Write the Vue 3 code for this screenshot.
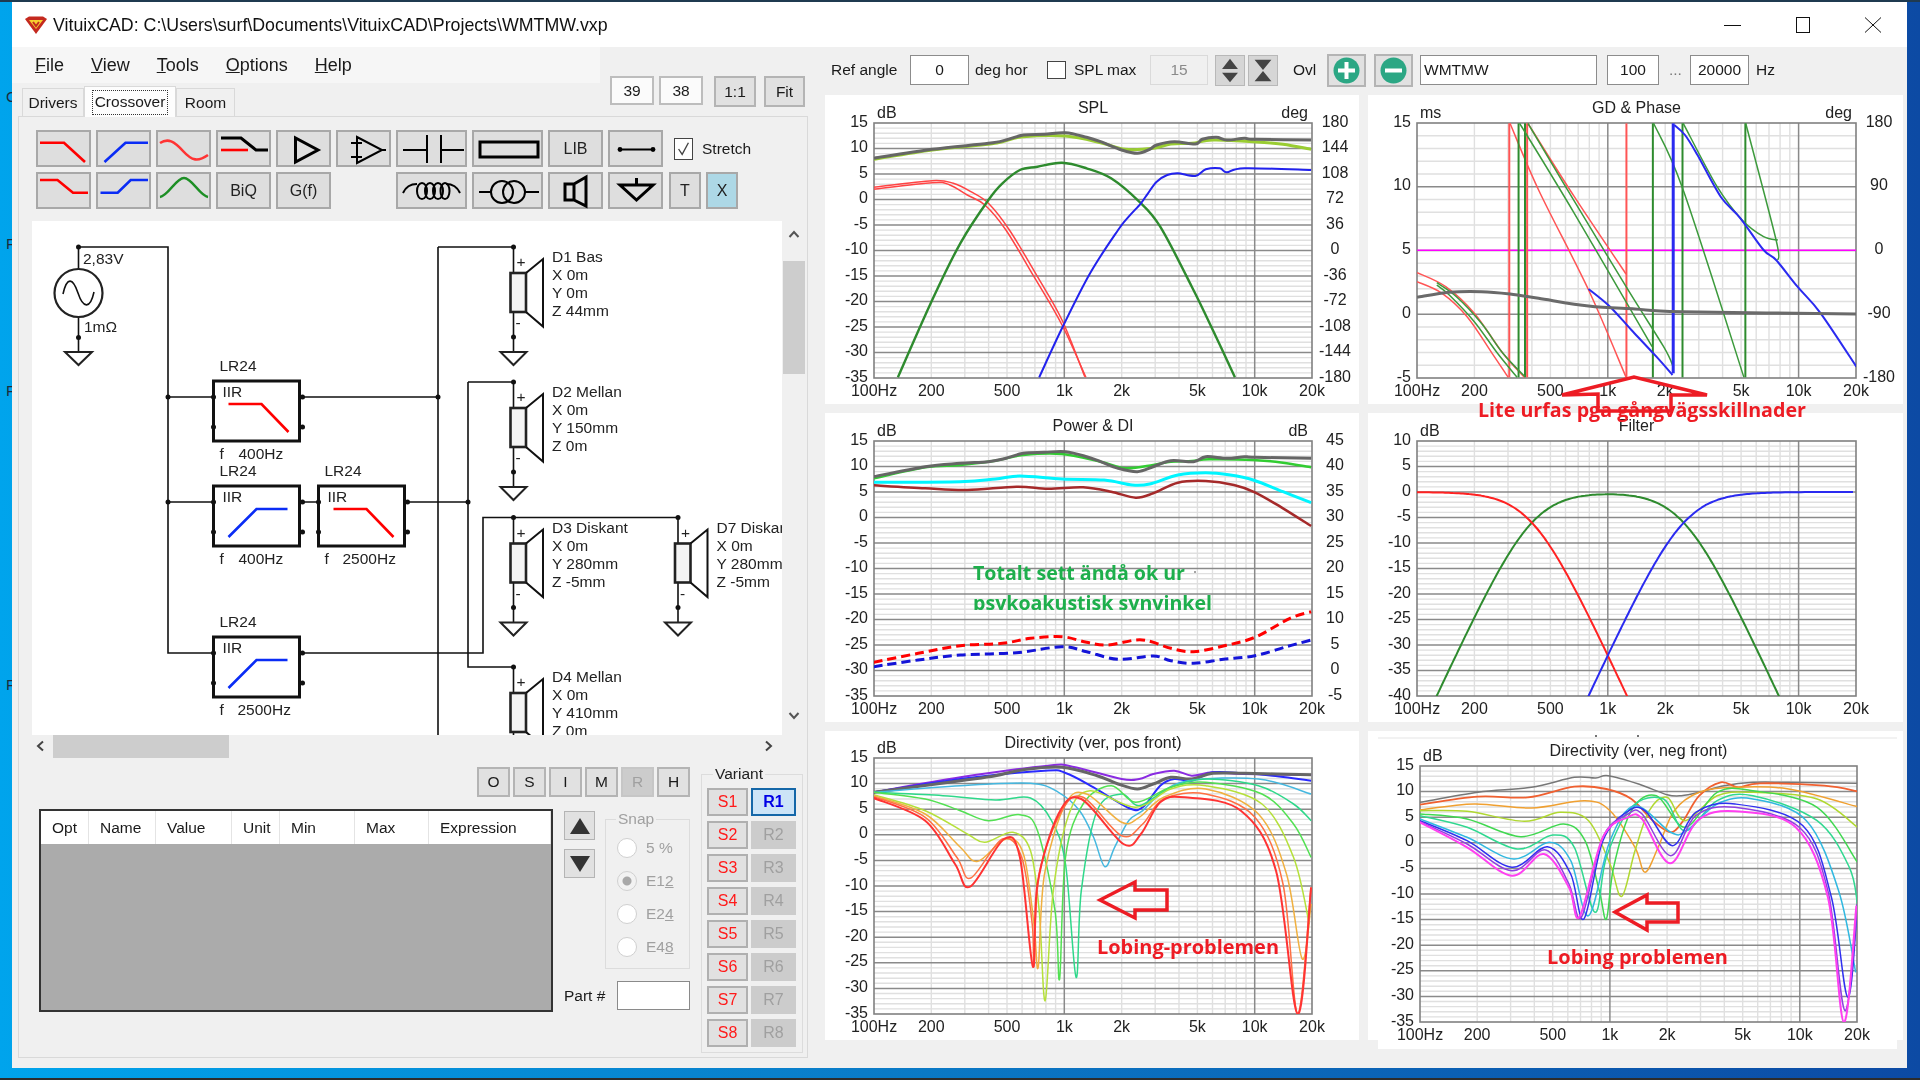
<template>
  <div class="desktop">
    <span class="desk-label desk-c">C</span>
    <span class="desk-label desk-f1">F</span>
    <span class="desk-label desk-f2">F</span>
    <span class="desk-label desk-f3">F</span>
    <div class="edge-top"></div>

    <div class="window">
      <div class="titlebar">
        <svg class="app-icon" viewBox="0 0 24 18">
          <path d="M1 3 L5 0.5 H19 L23 3 L12 18 Z" fill="#c4291f" />
          <path d="M5 4 H19 L12 13 Z" fill="#f6d02f" />
          <path d="M9 6 L12 10 L15 6" fill="none" stroke="#c4291f" stroke-width="2" />
        </svg>
        <span class="title-text">VituixCAD: C:\Users\surf\Documents\VituixCAD\Projects\WMTMW.vxp</span>
        <div class="win-btns">
          <svg class="win-btn" viewBox="0 0 18 16"><path d="M0 8.5 H17" /></svg>
          <svg class="win-btn" viewBox="0 0 18 16"><rect x="2.5" y="0.5" width="13" height="15" /></svg>
          <svg class="win-btn" viewBox="0 0 18 16"><path d="M1 0.5 L17 15.5 M17 0.5 L1 15.5" /></svg>
        </div>
      </div>

      <div class="client">
        <div class="left-pane">
          <div class="head-row">
            <div class="head-left">
              <div class="menu-bar">
                <span v-for="m in menus" :key="m.rest" class="menu-item"><u>{{ m.key }}</u>{{ m.rest }}</span>
              </div>
              <div class="tabs">
                <div class="tab tab-drivers">Drivers</div>
                <div class="tab tab-active"><span class="focus-rect">Crossover</span></div>
                <div class="tab tab-room">Room</div>
              </div>
            </div>
            <div class="view-btns">
              <div class="view-btn light">39</div>
              <div class="view-btn light">38</div>
              <div class="view-btn one">1:1</div>
              <div class="view-btn fit">Fit</div>
            </div>
          </div>

          <div class="tab-panel">
            <div class="tool-row">
              <button class="tool"><svg viewBox="0 0 55 37"><path class="red" d="M4 12.7 H28 L49 32" /></svg></button>
              <button class="tool"><svg viewBox="0 0 55 37"><path class="blue" d="M8.5 32 L29.5 12.7 H52" /></svg></button>
              <button class="tool"><svg viewBox="0 0 55 37"><path class="red soft" d="M4 13 C12 8 18 11 27 21 S42 32 52 25" /></svg></button>
              <button class="tool"><svg viewBox="0 0 55 37"><path class="ink" d="M5 8 H25 L40 20 H52" /><path class="red" d="M5 20 H32" /></svg></button>
              <button class="tool"><svg viewBox="0 0 55 37"><path class="ink" d="M19.5 8 V32 L42 20 Z" /></svg></button>
              <button class="tool">
                <svg viewBox="0 0 55 37">
                  <path class="ink thin" d="M21 7 V33 L46 20 Z" />
                  <path class="ink thin" d="M15 13 H26 M15 27 H26 M46 20 H50 M21 10 V16" />
                </svg>
              </button>
              <button class="tool wide"><svg viewBox="0 0 71 37"><path class="ink thin" d="M7 20 H31 M45 20 H68 M31 5 V33 M45 5 V33" /></svg></button>
              <button class="tool wide"><svg viewBox="0 0 71 37"><rect class="ink" x="8" y="12" width="58" height="15" /></svg></button>
              <button class="tool">LIB</button>
              <button class="tool"><svg viewBox="0 0 55 37"><path class="ink thin" d="M12 19.5 H45" /><circle cx="12" cy="19.5" r="2.4" /><circle cx="45" cy="19.5" r="2.4" /></svg></button>
              <label class="stretch">
                <span class="check-box"><svg viewBox="0 0 19 22"><path d="M4 11 L8 17 L15 4" /></svg></span>
                <span>Stretch</span>
              </label>
            </div>
            <div class="tool-row">
              <button class="tool"><svg viewBox="0 0 55 37"><path class="red" d="M4 8 H21.5 L37 20.7 H52" /></svg></button>
              <button class="tool"><svg viewBox="0 0 55 37"><path class="blue" d="M4.5 20.7 H21.7 L34.7 8 H52" /></svg></button>
              <button class="tool"><svg viewBox="0 0 55 37"><path class="green" d="M4 25 C12 24 20 6 28 6 S44 24 52 25" /></svg></button>
              <button class="tool">BiQ</button>
              <button class="tool">G(f)</button>
              <div class="tool-gap"></div>
              <button class="tool wide">
                <svg viewBox="0 0 71 37">
                  <path class="ink thin" d="M7 21 Q11 12 21 12 M50 12 Q60 12 64 21" />
                  <ellipse class="ink thin" cx="26" cy="19" rx="5" ry="8" />
                  <ellipse class="ink thin" cx="34" cy="19" rx="5" ry="8" />
                  <ellipse class="ink thin" cx="42" cy="19" rx="5" ry="8" />
                  <ellipse class="ink thin" cx="49" cy="19" rx="4.5" ry="8" />
                </svg>
              </button>
              <button class="tool wide">
                <svg viewBox="0 0 71 37">
                  <path class="ink thin" d="M7 20 H19 M53 20 H67" />
                  <circle class="ink thin" cx="30" cy="20" r="11" />
                  <circle class="ink thin" cx="42" cy="20" r="11" />
                </svg>
              </button>
              <button class="tool"><svg viewBox="0 0 55 37"><path class="ink" d="M17 12 H26 V28 H17 Z M26 12 L38 5 V34 L26 28" /></svg></button>
              <button class="tool"><svg viewBox="0 0 55 37"><path class="ink" d="M12 13 H45 L28.5 28 Z M28.5 6 V13" /></svg></button>
              <button class="tool narrow first-narrow">T</button>
              <button class="tool narrow x-on">X</button>
            </div>

            <div class="canvas-row">
              <svg class="schematic" width="750" height="514" viewBox="31 221 750 514">
                <g class="wires">
                  <path d="M77.5 247 H167 V653 H212 M167 397 H212 M167 502 H212" />
                  <path d="M77.5 247 V269 M77.5 317 V352" />
                  <path d="M302 397 H437 M437 247 H512.5 M437 247 V735" />
                  <path d="M302 502 H317.5 M407 502 H467 M467 382 H512.5 M467 382 V667 H512.5" />
                  <path d="M302 653 H482 V517.5 H677" />
                </g>
                <circle class="src" cx="77.5" cy="293" r="24" />
                <path class="wires" d="M62 294 C66 276 72 278 77 293 S89 310 93 292" />
                <path class="gnd" d="M64 352 H91 L77.5 365 Z" />
                <circle class="dot" cx="77.5" cy="247" r="2.5" />
                <circle class="dot" cx="77.5" cy="337.5" r="2.5" />
                <text x="82" y="264">2,83V</text>
                <text x="83" y="332">1mΩ</text>
                <circle v-for="p in junctions" :key="p[0] + '-' + p[1]" class="dot" :cx="p[0]" :cy="p[1]" r="2.5" />

                <g v-for="b in blocks" :key="b.x + '-' + b.y">
                  <rect class="block" :x="b.x" :y="b.y" width="86" height="60" />
                  <text :x="b.x + 6" :y="b.y - 10">LR24</text>
                  <text :x="b.x + 9" :y="b.y + 16">IIR</text>
                  <text :x="b.x + 6" :y="b.y + 78">f</text>
                  <text :x="b.x + b.fx" :y="b.y + 78">{{ b.freq }}</text>
                  <path :class="b.low ? 'red' : 'blue'" :d="b.low
                    ? `M${b.x + 15} ${b.y + 23} H${b.x + 48} L${b.x + 75} ${b.y + 51}`
                    : `M${b.x + 15} ${b.y + 51} L${b.x + 43} ${b.y + 23} H${b.x + 74}`" />
                  <circle class="dot" :cx="b.x" :cy="b.y + 16" r="2.5" />
                  <circle class="dot" :cx="b.x" :cy="b.y + 46" r="2.5" />
                  <circle class="dot" :cx="b.x + 89" :cy="b.y + 16" r="2.5" />
                  <circle class="dot" :cx="b.x + 89" :cy="b.y + 46" r="2.5" />
                </g>

                <g v-for="d in drivers" :key="d.name">
                  <path class="wires" :d="`M${d.x} ${d.y} V${d.y + 26} M${d.x} ${d.y + 65} V${d.y + 105}`" />
                  <circle class="dot" :cx="d.x" :cy="d.y" r="2.5" />
                  <circle class="dot" :cx="d.x" :cy="d.y + 90" r="2.5" />
                  <path class="gnd" :d="`M${d.x - 13} ${d.y + 105} H${d.x + 13} L${d.x} ${d.y + 118} Z`" />
                  <rect class="spk" :x="d.x - 3" :y="d.y + 26" width="15.5" height="39" />
                  <path class="wires thick" :d="`M${d.x + 12.5} ${d.y + 26} L${d.x + 29.5} ${d.y + 12} V${d.y + 79.5} L${d.x + 12.5} ${d.y + 65}`" />
                  <text :x="d.x + 3" :y="d.y + 20">+</text>
                  <text :x="d.x + 2" :y="d.y + 81">-</text>
                  <text :x="d.x + 38.5" :y="d.y + 15">{{ d.name }}</text>
                  <text :x="d.x + 38.5" :y="d.y + 33">X 0m</text>
                  <text :x="d.x + 38.5" :y="d.y + 51">Y {{ d.ypos }}</text>
                  <text :x="d.x + 38.5" :y="d.y + 69">Z {{ d.zpos }}</text>
                </g>
              </svg>
              <div class="vscroll">
                <svg class="chev" viewBox="0 0 12 8"><path d="M1.5 7 L6 2 L10.5 7" /></svg>
                <div class="vthumb"></div>
                <svg class="chev bottom" viewBox="0 0 12 8"><path d="M1.5 1 L6 6 L10.5 1" /></svg>
              </div>
            </div>
            <div class="hscroll">
              <svg class="hchev" viewBox="0 0 8 12"><path d="M7 1.5 L2 6 L7 10.5" /></svg>
              <div class="hthumb"></div>
              <svg class="hchev right" viewBox="0 0 8 12"><path d="M1 1.5 L6 6 L1 10.5" /></svg>
            </div>

            <div class="lower">
              <div class="lower-left">
                <div class="letter-row">
                  <div v-for="l in letters" :key="l" class="letter" :class="{ off: l === 'R' }">{{ l }}</div>
                </div>
                <div class="table-row">
                  <div class="opt-table">
                    <div class="opt-head">
                      <div v-for="h in tableCols" :key="h" class="opt-cell">{{ h }}</div>
                    </div>
                  </div>
                  <div class="side">
                    <div class="side-top">
                      <div class="arrows">
                        <div class="arrow-btn"><svg viewBox="0 0 20 18"><path d="M10 1 L20 17 H0 Z" /></svg></div>
                        <div class="arrow-btn"><svg viewBox="0 0 20 18"><path d="M0 1 H20 L10 17 Z" /></svg></div>
                      </div>
                      <div class="snap">
                        <span class="group-label snap-label">Snap</span>
                        <div v-for="s in snaps" :key="s.key" class="snap-opt">
                          <span class="radio" :class="{ sel: s.sel }"></span>
                          <span>{{ s.text }}<u v-if="s.sel || s.text !== '5 '">{{ s.key }}</u><template v-else>{{ s.key }}</template></span>
                        </div>
                      </div>
                    </div>
                    <div class="part-row">
                      <span class="part-label">Part #</span>
                      <div class="part-input"></div>
                    </div>
                  </div>
                </div>
              </div>
              <div class="variant">
                <span class="group-label variant-label">Variant</span>
                <div v-for="n in 8" :key="n" class="variant-row">
                  <div class="var-s">S{{ n }}</div>
                  <div class="var-r" :class="{ current: n === 1 }">R{{ n }}</div>
                </div>
              </div>
            </div>
          </div>
        </div>

        <div class="right-pane">
          <div class="top-bar">
            <span>Ref angle</span>
            <div class="field w59">0</div>
            <span>deg hor</span>
            <span class="check-box small"></span>
            <span>SPL max</span>
            <div class="field w58 off">15</div>
            <div class="spin">
              <svg viewBox="0 0 29 31"><path d="M14.5 3 L23 14 H6 Z M6 18 H23 L14.5 28 Z" /></svg>
            </div>
            <div class="spin">
              <svg viewBox="0 0 30 31"><path d="M6 4 H24 L15 15 Z M15 16 L24 27 H6 Z" /></svg>
            </div>
            <span>Ovl</span>
            <div class="round-btn">
              <svg viewBox="0 0 39 33"><circle cx="19.5" cy="16.5" r="13" /><path d="M19.5 8 V25 M11 16.5 H28" /></svg>
            </div>
            <div class="round-btn">
              <svg viewBox="0 0 39 33"><circle cx="19.5" cy="16.5" r="13" /><path d="M11 16.5 H28" /></svg>
            </div>
            <div class="field w177">WMTMW</div>
            <div class="field w52">100</div>
            <span class="dots">...</span>
            <div class="field w59">20000</div>
            <span>Hz</span>
          </div>

          <div class="chart-grid">
            <div v-for="c in charts" :key="c.key" class="chart-panel" :class="{ raised: c.raised }">
              <svg class="chart" :width="c.w" :height="c.h" :viewBox="`${c.x} ${c.y} ${c.w} ${c.h}`">
                <defs>
                  <clipPath :id="`plot-${c.key}`">
                    <rect :x="c.px" :y="c.py" :width="c.pw" :height="c.ph" />
                  </clipPath>
                </defs>
                <template v-if="c.paste">
                  <rect :x="c.paste.x" :y="c.paste.y" :width="c.paste.w" :height="c.paste.h" fill="#fff" />
                  <path :d="`M${c.paste.x} ${c.paste.y + 1} h${c.paste.w}`" stroke="#eee" stroke-width="1.5" />
                </template>

                <path class="grid-minor" :d="c.minorPath" />
                <path class="grid-major" :d="c.majorPath" />
                <rect class="plot-frame" :x="c.px" :y="c.py" :width="c.pw" :height="c.ph" />

                <g :clip-path="`url(#plot-${c.key})`">
                  <path
                    v-for="(t, i) in c.traces"
                    :key="i"
                    class="trace"
                    :d="t.d"
                    :stroke="t.color"
                    :stroke-width="t.w"
                    :stroke-dasharray="t.dash"
                  />
                </g>

                <text :x="c.px + c.pw / 2" :y="c.py - 16" class="mid">{{ c.title }}</text>
                <text :x="c.px + 3" :y="c.py - 11">{{ c.leftUnit }}</text>
                <text v-if="c.rightUnit" :x="c.px + c.pw - 4" :y="c.py - 11" class="end">{{ c.rightUnit }}</text>
                <text v-for="t in c.leftTicks" :key="t.v" :x="c.px - 6" :y="t.y" class="end">{{ t.v }}</text>
                <text v-for="t in c.rightTicks" :key="t.v" :x="c.px + c.pw + 23" :y="t.y" class="mid">{{ t.v }}</text>
                <text v-for="t in c.xTicks" :key="t.v" :x="t.x" :y="c.py + c.ph + 12" class="mid">{{ t.v }}</text>

                <path v-if="c.arrow" class="note-arrow" :d="c.arrow" />
                <text
                  v-for="n in c.notes"
                  :key="n.text"
                  class="note"
                  :class="n.tone"
                  :x="n.x"
                  :y="n.y"
                  :textLength="n.len"
                  lengthAdjust="spacingAndGlyphs"
                  :clip-path="n.clip ? 'url(#note-clip)' : null"
                >{{ n.text }}</text>
                <template v-if="c.key === 'power'">
                  <clipPath id="note-clip"><rect x="960" y="540" width="270" height="70" /></clipPath>
                  <circle cx="1195" cy="572" r="0.8" fill="#333" />
                </template>
                <template v-if="c.paste">
                  <circle cx="1596" cy="737" r="1" fill="#444" />
                  <circle cx="1638" cy="737" r="1" fill="#444" />
                </template>
              </svg>
            </div>
          </div>
        </div>
      </div>
    </div>

    <div class="edge-gap"></div>
    <div class="taskbar"></div>
  </div>
</template>

<script setup>
const menus = [
  { key: 'F', rest: 'ile' },
  { key: 'V', rest: 'iew' },
  { key: 'T', rest: 'ools' },
  { key: 'O', rest: 'ptions' },
  { key: 'H', rest: 'elp' }
]
const letters = ['O', 'S', 'I', 'M', 'R', 'H']
const tableCols = ['Opt', 'Name', 'Value', 'Unit', 'Min', 'Max', 'Expression']
const snaps = [
  { text: '5 ', key: '%', sel: false },
  { text: 'E1', key: '2', sel: true },
  { text: 'E2', key: '4', sel: false },
  { text: 'E4', key: '8', sel: false }
]

const blocks = [
  { x: 212.5, y: 381, low: true, freq: '400Hz', fx: 25 },
  { x: 212.5, y: 486, low: false, freq: '400Hz', fx: 25 },
  { x: 317.5, y: 486, low: true, freq: '2500Hz', fx: 24 },
  { x: 212.5, y: 637, low: false, freq: '2500Hz', fx: 24 }
]
const drivers = [
  { name: 'D1 Bas', x: 512.5, y: 247, ypos: '0m', zpos: '44mm' },
  { name: 'D2 Mellan', x: 512.5, y: 382, ypos: '150mm', zpos: '0m' },
  { name: 'D3 Diskant', x: 512.5, y: 517.5, ypos: '280mm', zpos: '-5mm' },
  { name: 'D7 Diskant', x: 677, y: 517.5, ypos: '280mm', zpos: '-5mm' },
  { name: 'D4 Mellan', x: 512.5, y: 667, ypos: '410mm', zpos: '0m' }
]
const junctions = [[167, 397], [167, 502], [437, 397], [467, 502]]

const FREQ_LINES = [200, 300, 400, 500, 600, 700, 800, 900, 2000, 3000, 4000, 5000, 6000, 7000, 8000, 9000]
const FREQ_LABELS = [[100, '100Hz'], [200, '200'], [500, '500'], [1000, '1k'], [2000, '2k'], [5000, '5k'], [10000, '10k'], [20000, '20k']]

// catmull-rom through the points, two points stay a straight line
function smooth(p) {
  if (p.length < 3) return `M${p[0][0]} ${p[0][1]} L${p[1][0]} ${p[1][1]}`
  let d = `M${p[0][0].toFixed(1)} ${p[0][1].toFixed(1)}`
  for (let i = 0; i < p.length - 1; i++) {
    const a = p[Math.max(i - 1, 0)]
    const b = p[i]
    const c = p[i + 1]
    const e = p[Math.min(i + 2, p.length - 1)]
    const c1 = [b[0] + (c[0] - a[0]) / 6, b[1] + (c[1] - a[1]) / 6]
    const c2 = [c[0] - (e[0] - b[0]) / 6, c[1] - (e[1] - b[1]) / 6]
    d += ` C${c1[0].toFixed(1)} ${c1[1].toFixed(1)} ${c2[0].toFixed(1)} ${c2[1].toFixed(1)} ${c[0].toFixed(1)} ${c[1].toFixed(1)}`
  }
  return d
}

// traces are given in the space of a 1568 wide crop, sx is that crop's scale
function traceSet(list, ox, oy, sx) {
  return list.map(t => {
    const pts = []
    for (let i = 0; i < t.p.length; i += 2) pts.push([ox + t.p[i] / sx, oy + t.p[i + 1] / 3])
    return { color: t.c, w: t.w || 1.5, dash: t.dash, d: smooth(pts) }
  })
}

function vert(x) {
  return { c: x.c, w: x.w, p: [x.x, 100, x.x, 862] }
}

function buildChart(o) {
  const decade = o.pw / Math.log10(200)
  const fx = f => o.px + decade * Math.log10(f / 100)
  let minor = ''
  let major = ''
  const divs = o.left.length - 1
  const step = o.ph / divs
  for (let i = 0; i < divs * 5; i++) {
    const y = o.py + (o.ph / (divs * 5)) * i
    if (i % 5) minor += `M${o.px} ${y.toFixed(1)} H${o.px + o.pw} `
    else if (i) major += `M${o.px} ${y.toFixed(1)} H${o.px + o.pw} `
  }
  for (const f of FREQ_LINES) minor += `M${fx(f).toFixed(1)} ${o.py} V${o.py + o.ph} `
  major += `M${fx(1000).toFixed(1)} ${o.py} V${o.py + o.ph} M${fx(10000).toFixed(1)} ${o.py} V${o.py + o.ph}`
  return {
    ...o,
    minorPath: minor,
    majorPath: major,
    leftTicks: o.left.map((v, i) => ({ v, y: o.py + step * i - 2 })),
    rightTicks: (o.right || []).map((v, i) => ({ v, y: o.py + (o.ph / (o.right.length - 1)) * i - 2 })),
    xTicks: FREQ_LABELS.map(([f, v]) => ({ v, x: fx(f) }))
  }
}

const DB_15 = [15, 10, 5, 0, -5, -10, -15, -20, -25, -30, -35]

const splTraces = traceSet([
  { c: '#9acd32', w: 3, p: [153, 208, 320, 180, 480, 163, 520, 155, 580, 140, 700, 138, 800, 158, 870, 178, 950, 175, 1000, 162, 1060, 160, 1120, 150, 1235, 155, 1320, 163, 1400, 178] },
  { c: '#666', w: 3, p: [153, 205, 320, 178, 480, 160, 530, 150, 580, 135, 640, 133, 700, 128, 760, 142, 800, 155, 860, 180, 905, 190, 940, 178, 960, 165, 1010, 155, 1070, 162, 1090, 148, 1130, 142, 1160, 150, 1210, 145, 1240, 148, 1400, 150] },
  { c: '#f44', p: [153, 292, 320, 272, 380, 280, 430, 305, 480, 340, 540, 420, 620, 560, 690, 690, 755, 860] },
  { c: '#f44', p: [153, 298, 320, 278, 370, 285, 420, 315, 470, 345, 530, 420, 610, 560, 690, 705, 758, 862] },
  { c: '#2e8b2e', w: 2.4, p: [222, 862, 320, 630, 400, 460, 480, 330, 520, 280, 570, 240, 620, 230, 690, 218, 760, 235, 830, 265, 910, 335, 970, 410, 1060, 590, 1120, 720, 1183, 862] },
  { c: '#2222ee', w: 2, p: [625, 862, 690, 715, 770, 550, 850, 420, 880, 380, 915, 340, 935, 310, 960, 275, 990, 255, 1020, 250, 1070, 258, 1100, 238, 1140, 235, 1160, 247, 1210, 235, 1400, 240] }
], 820, 90, 2.851)

const gdTraces = traceSet([
  { c: '#ff00ff', p: [160, 481, 1390, 481] },
  vert({ x: 418, c: '#f55', w: 2 }),
  vert({ x: 468, c: '#f55', w: 2 }),
  vert({ x: 746, c: '#f55', w: 2 }),
  { c: '#f55', p: [160, 548, 240, 590, 320, 670, 400, 790, 460, 862] },
  { c: '#f55', p: [160, 575, 230, 610, 300, 680, 370, 790, 415, 862] },
  { c: '#f55', p: [420, 100, 500, 300, 640, 600, 745, 862] },
  { c: '#f55', p: [470, 100, 600, 320, 745, 552] },
  vert({ x: 444, c: '#2e8b2e', w: 2 }),
  vert({ x: 462, c: '#2e8b2e', w: 2 }),
  vert({ x: 820, c: '#2e8b2e', w: 2 }),
  vert({ x: 903, c: '#2e8b2e', w: 2 }),
  vert({ x: 1079, c: '#2e8b2e', w: 2 }),
  { c: '#3c9a3c', p: [215, 578, 270, 620, 340, 700, 400, 790, 462, 860] },
  { c: '#3c9a3c', p: [215, 585, 250, 615, 320, 695, 385, 790, 440, 862] },
  { c: '#3c9a3c', p: [447, 100, 600, 370, 818, 770] },
  { c: '#3c9a3c', p: [470, 100, 570, 280, 745, 590, 850, 770, 877, 830] },
  { c: '#3c9a3c', p: [822, 100, 905, 300, 1075, 862] },
  { c: '#3c9a3c', p: [905, 100, 1000, 290, 1070, 390, 1130, 440, 1170, 450] },
  { c: '#3c9a3c', p: [1080, 100, 1165, 450, 1170, 510] },
  { c: '#2a2af0', w: 2, p: [640, 597, 700, 650, 760, 720, 830, 800, 875, 855] },
  { c: '#2a2af0', w: 3, p: [877, 100, 877, 850] },
  { c: '#2a2af0', w: 2, p: [880, 105, 910, 135, 945, 195, 1010, 320, 1065, 385, 1130, 480, 1165, 510, 1225, 590, 1290, 670, 1390, 830] },
  { c: '#6a6a6a', w: 3, p: [160, 622, 250, 607, 340, 605, 420, 612, 500, 625, 640, 648, 770, 657, 900, 665, 1390, 672] }
], 1360, 90, 2.8)

const powerTraces = traceSet([
  { c: '#32cd32', w: 2.5, p: [153, 205, 300, 172, 400, 165, 500, 152, 580, 135, 690, 132, 800, 155, 870, 175, 950, 165, 1000, 155, 1060, 153, 1110, 148, 1235, 150, 1320, 158, 1400, 172] },
  { c: '#666', w: 3, p: [153, 200, 300, 170, 400, 160, 480, 155, 530, 145, 580, 130, 640, 127, 700, 125, 760, 140, 800, 155, 850, 175, 905, 185, 950, 170, 1000, 152, 1065, 155, 1100, 140, 1160, 145, 1210, 140, 1240, 142, 1400, 145] },
  { c: '#00f5ff', w: 3, p: [153, 217, 400, 215, 500, 207, 570, 198, 690, 207, 810, 210, 890, 225, 940, 222, 1020, 195, 1100, 188, 1170, 195, 1235, 210, 1320, 245, 1400, 278] },
  { c: '#a52a2a', w: 2.6, p: [153, 226, 300, 235, 420, 240, 560, 230, 650, 236, 750, 232, 830, 245, 900, 263, 950, 250, 1020, 218, 1100, 213, 1180, 225, 1240, 247, 1320, 295, 1400, 348] },
  { c: '#f00', w: 3, dash: '9 5', p: [153, 757, 280, 730, 400, 707, 520, 700, 600, 685, 690, 680, 760, 697, 820, 705, 900, 690, 945, 695, 1000, 715, 1065, 725, 1150, 708, 1240, 682, 1340, 625, 1400, 605] },
  { c: '#1414d8', w: 3, dash: '9 5', p: [153, 770, 280, 750, 400, 735, 560, 728, 690, 710, 760, 725, 850, 748, 950, 738, 1000, 752, 1065, 760, 1150, 748, 1240, 737, 1330, 710, 1400, 690] }
], 820, 410, 2.851)

const lr24 = r => -20 * Math.log10(1 + Math.pow(r, 4))
const filterShape = {
  low: f => lr24(f / 400),
  mid: f => lr24(400 / f) + lr24(f / 2500),
  high: f => lr24(2500 / f)
}
function filterTrace(fn, color) {
  const pts = []
  const decade = 439 / Math.log10(200)
  for (let x = 0; x <= 439; x += 4) {
    const f = 100 * Math.pow(10, x / decade)
    pts.push([1417 + x, 441 + (10 - fn(f)) * 5.1])
  }
  return { color, w: 2, d: smooth(pts) }
}

const posFront = traceSet([
  { c: '#8a2be2', w: 2, p: [153, 205, 400, 160, 650, 125, 720, 128, 860, 165, 910, 165, 950, 150, 1010, 140, 1060, 155, 1120, 145, 1210, 150, 1400, 153] },
  { c: '#2a2aff', w: 2, p: [153, 205, 400, 165, 640, 140, 700, 147, 780, 190, 880, 252, 920, 250, 970, 185, 1010, 165, 1060, 170, 1120, 145, 1210, 148, 1290, 155, 1400, 170] },
  { c: '#666', w: 3, p: [153, 205, 400, 170, 500, 155, 580, 137, 690, 130, 790, 155, 850, 180, 905, 195, 950, 180, 1000, 160, 1060, 165, 1120, 148, 1210, 148, 1400, 152] },
  { c: '#45b8e0', p: [153, 205, 400, 185, 600, 178, 680, 205, 740, 260, 780, 340, 812, 428, 840, 370, 880, 290, 920, 260, 970, 210, 1050, 170, 1250, 165, 1400, 210] },
  { c: '#2ed88a', p: [153, 205, 350, 215, 500, 228, 600, 222, 660, 290, 700, 420, 730, 760, 745, 500, 790, 260, 860, 210, 910, 245, 1000, 190, 1100, 165, 1250, 185, 1350, 240, 1400, 290] },
  { c: '#52e052', p: [153, 205, 300, 225, 400, 260, 480, 290, 570, 272, 620, 320, 670, 560, 683, 765, 700, 400, 750, 240, 830, 185, 900, 235, 1000, 190, 1100, 175, 1260, 210, 1350, 300, 1400, 400] },
  { c: '#b5e03a', p: [153, 212, 300, 260, 420, 330, 470, 355, 550, 325, 600, 380, 625, 560, 642, 830, 665, 500, 710, 270, 770, 200, 900, 250, 1000, 195, 1100, 185, 1260, 240, 1350, 400, 1395, 600] },
  { c: '#f0b040', p: [153, 215, 300, 270, 400, 370, 450, 412, 530, 345, 580, 390, 610, 600, 622, 730, 640, 450, 700, 240, 760, 210, 860, 295, 910, 280, 980, 220, 1100, 195, 1250, 270, 1330, 450, 1375, 705, 1400, 540] },
  { c: '#ff7043', p: [153, 218, 300, 280, 390, 400, 430, 462, 520, 345, 575, 400, 605, 600, 610, 725, 625, 450, 690, 260, 750, 220, 860, 335, 920, 300, 980, 225, 1100, 210, 1240, 280, 1320, 480, 1362, 870, 1400, 490] },
  { c: '#f33', w: 2, p: [153, 222, 300, 290, 385, 420, 428, 488, 525, 345, 570, 400, 607, 728, 620, 480, 680, 270, 745, 225, 865, 360, 915, 330, 970, 235, 1040, 220, 1200, 260, 1300, 440, 1362, 870, 1400, 490] }
], 820, 725, 2.851)

const negFront = traceSet([
  { c: '#777', p: [168, 235, 330, 205, 480, 190, 600, 160, 660, 162, 695, 155, 780, 180, 860, 212, 900, 215, 950, 205, 1020, 185, 1100, 175, 1200, 175, 1393, 178] },
  { c: '#f06030', w: 1.8, p: [168, 242, 330, 218, 470, 220, 600, 188, 690, 195, 760, 225, 820, 290, 870, 325, 905, 290, 950, 215, 1010, 175, 1060, 190, 1120, 178, 1300, 185, 1393, 202] },
  { c: '#f0a030', p: [168, 258, 320, 240, 480, 252, 630, 230, 700, 260, 770, 370, 798, 445, 835, 370, 880, 260, 950, 205, 1050, 190, 1200, 195, 1393, 248] },
  { c: '#b0d830', p: [168, 260, 300, 262, 460, 292, 560, 265, 640, 290, 700, 420, 733, 517, 770, 380, 810, 260, 860, 220, 910, 290, 1000, 215, 1100, 205, 1280, 225, 1393, 310] },
  { c: '#40d850', p: [168, 270, 300, 285, 450, 338, 570, 300, 630, 350, 670, 500, 690, 585, 710, 430, 760, 260, 830, 215, 910, 310, 1000, 205, 1100, 200, 1280, 250, 1393, 415] },
  { c: '#30d890', p: [168, 275, 300, 310, 440, 375, 540, 333, 600, 370, 658, 565, 690, 400, 760, 250, 850, 225, 910, 320, 1000, 230, 1100, 215, 1280, 290, 1370, 430, 1393, 540] },
  { c: '#30b8e0', p: [168, 285, 300, 340, 430, 405, 530, 355, 590, 410, 640, 575, 700, 350, 770, 245, 870, 325, 915, 320, 1000, 240, 1100, 225, 1250, 290, 1340, 500, 1388, 745] },
  { c: '#3030f0', p: [168, 290, 300, 350, 425, 430, 525, 368, 590, 450, 627, 585, 680, 350, 750, 262, 800, 262, 875, 365, 940, 265, 1050, 240, 1240, 305, 1320, 520, 1366, 820, 1393, 540] },
  { c: '#9040e0', p: [168, 293, 300, 360, 425, 440, 520, 378, 585, 480, 620, 580, 680, 340, 750, 270, 790, 270, 870, 395, 940, 275, 1050, 250, 1230, 310, 1310, 500, 1358, 860, 1393, 540] },
  { c: '#ff40f0', w: 2, p: [168, 295, 300, 370, 425, 455, 515, 390, 585, 490, 615, 578, 680, 340, 750, 280, 790, 285, 868, 418, 945, 290, 1050, 262, 1220, 310, 1310, 520, 1355, 895, 1390, 545] }
], 1360, 725, 2.8)

const charts = [
  buildChart({
    key: 'spl', title: 'SPL', x: 825, y: 95, w: 534, h: 309,
    px: 874, py: 123, pw: 438, ph: 255,
    leftUnit: 'dB', rightUnit: 'deg', left: DB_15,
    right: [180, 144, 108, 72, 36, 0, -36, -72, -108, -144, -180],
    traces: splTraces
  }),
  buildChart({
    key: 'gd', title: 'GD & Phase', x: 1368, y: 95, w: 535, h: 309, raised: true,
    px: 1417, py: 123, pw: 439, ph: 255,
    leftUnit: 'ms', rightUnit: 'deg', left: [15, 10, 5, 0, -5],
    right: [180, 90, 0, -90, -180],
    traces: gdTraces,
    arrow: 'M1562 395 L1634 377 L1707 395 H1671 V411 H1598 V394 Z',
    notes: [{ x: 1478, y: 417, len: 328, text: 'Lite urfas pga gångvägsskillnader', tone: 'note-red' }]
  }),
  buildChart({
    key: 'power', title: 'Power & DI', x: 825, y: 413, w: 534, h: 310,
    px: 874, py: 441, pw: 438, ph: 255,
    leftUnit: 'dB', rightUnit: 'dB', left: DB_15,
    right: [45, 40, 35, 30, 25, 20, 15, 10, 5, 0, -5],
    traces: powerTraces,
    notes: [
      { x: 973, y: 580, len: 212, text: 'Totalt sett ändå ok ur', tone: 'note-green' },
      { x: 973, y: 610, len: 239, text: 'psykoakustisk synvinkel', tone: 'note-green', clip: true }
    ]
  }),
  buildChart({
    key: 'filter', title: 'Filter', x: 1368, y: 413, w: 535, h: 310,
    px: 1417, py: 441, pw: 439, ph: 255,
    leftUnit: 'dB', left: [10, 5, 0, -5, -10, -15, -20, -25, -30, -35, -40],
    traces: [
      filterTrace(filterShape.mid, '#2e8b2e'),
      filterTrace(filterShape.low, '#f22'),
      filterTrace(filterShape.high, '#2a2af0')
    ]
  }),
  buildChart({
    key: 'pos', title: 'Directivity (ver, pos front)', x: 825, y: 732, w: 534, h: 310,
    px: 874, py: 759, pw: 438, ph: 256,
    leftUnit: 'dB', left: DB_15,
    traces: posFront,
    arrow: 'M1100 901 L1135 883 V891 H1167 V911 H1135 V919 Z',
    notes: [{ x: 1097, y: 955, len: 182, text: 'Lobing-problemen', tone: 'note-red' }]
  }),
  buildChart({
    key: 'neg', title: 'Directivity (ver, neg front)', x: 1368, y: 732, w: 535, h: 310,
    px: 1420, py: 767, pw: 437, ph: 256,
    leftUnit: 'dB', left: DB_15,
    paste: { x: 1378, y: 738, w: 519, h: 312 },
    traces: negFront,
    arrow: 'M1615 913 L1647 896 V904 H1678 V923 H1647 V931 Z',
    notes: [{ x: 1547, y: 965, len: 181, text: 'Lobing problemen', tone: 'note-red' }]
  })
]
</script>

<style>
html, body {
  margin: 0;
  padding: 0;
  background: #0b4ea2;
}
</style>

<style scoped>
.desktop {
  position: relative;
  width: 1920px;
  height: 1080px;
  overflow: hidden;
  display: flex;
  flex-direction: column;
  background: linear-gradient(90deg, #00a4ec 0%, #0a7cc8 45%, #0c4aa4 100%);
  font-family: "Liberation Sans", Arial, sans-serif;
  color: #1a1a1a;
  font-size: 15.5px;
}

.desk-label {
  position: absolute;
  left: 6px;
  font-size: 15px;
  color: #1d2c3c;
}
.desk-c { top: 88px; }
.desk-f1 { top: 235px; }
.desk-f2 { top: 382px; }
.desk-f3 { top: 676px; }

.edge-top {
  height: 2px;
  background: #1f3a50;
}
.edge-gap {
  height: 10px;
}
.taskbar {
  height: 2px;
  background: #2c2c2c;
}

.window {
  position: relative;
  margin-left: 12px;
  width: 1895px;
  height: 1066px;
  display: flex;
  flex-direction: column;
  background: #f0f0f0;
  filter: blur(0.35px);
}

.titlebar {
  height: 45px;
  flex: none;
  display: flex;
  align-items: center;
  background: #fff;
}
.app-icon {
  width: 24px;
  height: 18px;
  margin-left: 12px;
  margin-top: 1px;
}
.title-text {
  margin-left: 5px;
  font-size: 17.8px;
  color: #111;
  margin-top: 1px;
}
.win-btns {
  margin-left: auto;
  margin-right: 25px;
  display: flex;
  gap: 52px;
}
.win-btn {
  width: 18px;
  height: 16px;
  fill: none;
  stroke: #111;
  stroke-width: 1;
}

.client {
  flex: 1;
  display: flex;
  min-height: 0;
}
.left-pane {
  width: 796px;
  flex: none;
}

.head-row {
  display: flex;
  height: 69px;
}
.head-left {
  width: 588px;
  flex: none;
}
.menu-bar {
  height: 36px;
  display: flex;
  align-items: center;
  gap: 27px;
  padding-left: 23px;
  font-size: 18px;
  background: #f6f6f6;
}
.tabs {
  display: flex;
  align-items: flex-end;
  height: 33px;
  padding-left: 10px;
}
.tab {
  box-sizing: border-box;
  height: 28px;
  border: 1px solid #d9d9d9;
  border-bottom: none;
  display: flex;
  align-items: center;
  justify-content: center;
}
.tab-drivers {
  width: 62px;
}
.tab-active {
  width: 92px;
  height: 31px;
  background: #fdfdfd;
  position: relative;
  z-index: 1;
  margin-bottom: -1px;
}
.focus-rect {
  border: 1px dotted #333;
  padding: 2px 2px 3px;
  line-height: 18px;
}
.tab-room {
  width: 59px;
}

.view-btns {
  display: flex;
  padding-top: 29px;
  align-items: flex-start;
}
.view-btn {
  box-sizing: border-box;
  height: 31px;
  display: flex;
  align-items: center;
  justify-content: center;
  background: #e1e1e1;
  border: 2px solid #b4b4b4;
}
.view-btn.light {
  width: 44px;
  height: 29px;
  margin-right: 5px;
  background: #fbfbfb;
  border-color: #bdbdbd;
}
.view-btn.light:first-child {
  margin-left: 10px;
}
.view-btn.one {
  width: 42px;
  margin-left: 6px;
}
.view-btn.fit {
  width: 41px;
  margin-left: 8px;
}

.tab-panel {
  box-sizing: border-box;
  width: 790px;
  height: 942px;
  margin-left: 6px;
  padding: 13px 0 0 17px;
  border: 1px solid #d9d9d9;
  background: #f0f0f0;
}

.tool-row {
  display: flex;
  gap: 5px;
  height: 37px;
  margin-bottom: 5px;
  align-items: center;
}
.tool {
  box-sizing: border-box;
  width: 55px;
  height: 37px;
  padding: 0;
  border: none;
  flex: none;
  font-family: inherit;
  font-size: 16px;
  color: #222;
  background: #dedede;
  box-shadow: inset 0 0 0 2px #a8a8a8;
}
.tool.wide {
  width: 71px;
}
.tool.narrow {
  width: 32px;
}
.tool.first-narrow {
  margin-left: 1px;
}
.tool.x-on {
  background: #add8e6;
}
.tool svg {
  display: block;
  width: 100%;
  height: 100%;
}
.tool-gap {
  width: 55px;
  flex: none;
}
.red, .blue, .green, .ink {
  fill: none;
  stroke-width: 2.6;
}
.red { stroke: #f00; }
.blue { stroke: #0a2cf5; }
.green { stroke: #1d8f25; }
.ink { stroke: #000; stroke-width: 3; }
.ink.thin { stroke-width: 2; }
.soft { stroke: #f33; }

.stretch {
  display: flex;
  align-items: center;
  margin-left: 6px;
  gap: 9px;
}
.check-box {
  box-sizing: border-box;
  display: block;
  width: 19px;
  height: 22px;
  background: #fff;
  border: 1.5px solid #444;
}
.check-box svg {
  display: block;
  width: 100%;
  height: 100%;
  fill: none;
  stroke: #444;
  stroke-width: 1.5;
}
.check-box.small {
  height: 18px;
}

.canvas-row {
  display: flex;
  margin-top: 12px;
  margin-left: -4px;
  height: 514px;
}
.schematic {
  display: block;
  background: #fff;
  flex: none;
}
.schematic text {
  font-size: 15.5px;
  fill: #222;
}
.wires {
  fill: none;
  stroke: #111;
  stroke-width: 1.6;
}
.wires.thick {
  stroke-width: 2;
}
.src, .gnd {
  fill: none;
  stroke: #222;
  stroke-width: 2.2;
}
.gnd {
  stroke-width: 2;
}
.dot {
  fill: #111;
}
.block {
  fill: #fff;
  stroke: #111;
  stroke-width: 3;
}
.spk {
  fill: #f4f4f4;
  stroke: #222;
  stroke-width: 2.6;
}

.vscroll {
  position: relative;
  width: 24px;
  flex: none;
}
.vthumb {
  position: absolute;
  top: 40px;
  left: 1px;
  width: 22px;
  height: 113px;
  background: #cdcdcd;
}
.chev {
  position: absolute;
  top: 9px;
  left: 6px;
  width: 12px;
  height: 8px;
  fill: none;
  stroke: #555;
  stroke-width: 2;
}
.chev.bottom {
  top: 491px;
}

.hscroll {
  position: relative;
  height: 23px;
  margin-left: -4px;
  width: 750px;
}
.hthumb {
  position: absolute;
  left: 21px;
  top: 0;
  width: 176px;
  height: 23px;
  background: #cdcdcd;
}
.hchev {
  position: absolute;
  left: 4px;
  top: 5px;
  width: 8px;
  height: 12px;
  fill: none;
  stroke: #444;
  stroke-width: 2;
}
.hchev.right {
  left: 733px;
}

.lower {
  display: flex;
  align-items: flex-start;
  margin-left: 3px;
}
.lower-left {
  width: 651px;
  flex: none;
}
.letter-row {
  display: flex;
  justify-content: flex-end;
  gap: 3px;
  margin-top: 9px;
}
.letter {
  box-sizing: border-box;
  width: 33px;
  height: 30px;
  display: flex;
  align-items: center;
  justify-content: center;
  background: #e1e1e1;
  border: 2px solid #b4b4b4;
}
.letter.off {
  background: #cccccc;
  border-color: #c6c6c6;
  color: #a0a0a0;
}
.table-row {
  display: flex;
  margin-top: 12px;
}
.opt-table {
  box-sizing: border-box;
  width: 514px;
  height: 203px;
  border: 2px solid #333;
  background: #ababab;
  flex: none;
}
.opt-head {
  height: 33px;
  display: grid;
  grid-template-columns: 48px 67px 76px 48px 75px 74px 1fr;
  background: #fff;
}
.opt-cell {
  display: flex;
  align-items: center;
  padding-left: 11px;
  border-right: 1px solid #e4e4e4;
}
.side {
  margin-left: 11px;
  width: 126px;
  flex: none;
}
.side-top {
  display: flex;
}
.arrows {
  width: 31px;
  flex: none;
  padding-top: 2px;
}
.arrow-btn {
  box-sizing: border-box;
  width: 31px;
  height: 29px;
  margin-bottom: 9px;
  background: #e1e1e1;
  border: 1px solid #b4b4b4;
  display: flex;
  align-items: center;
  justify-content: center;
}
.arrow-btn svg {
  width: 20px;
  height: 18px;
  fill: #333;
}
.snap {
  position: relative;
  box-sizing: border-box;
  width: 85px;
  height: 150px;
  margin-left: 10px;
  margin-top: 10px;
  padding-top: 11px;
  border: 1px solid #dcdcdc;
  color: #a0a0a0;
}
.group-label {
  position: absolute;
  top: -11px;
  background: #f0f0f0;
  padding: 0 2px;
  line-height: 20px;
}
.snap-label {
  left: 10px;
}
.snap-opt {
  display: flex;
  align-items: center;
  gap: 9px;
  height: 33px;
  padding-left: 11px;
}
.radio {
  box-sizing: border-box;
  width: 20px;
  height: 20px;
  border-radius: 50%;
  background: #fff;
  border: 1px solid #d0d0d0;
  flex: none;
}
.radio.sel {
  background: radial-gradient(circle, #a8a8a8 0 4px, #f2f2f2 5px);
}
.part-row {
  display: flex;
  align-items: center;
  justify-content: space-between;
  margin-top: 12px;
}
.part-label {
  white-space: nowrap;
}
.part-input {
  box-sizing: border-box;
  width: 73px;
  height: 29px;
  flex: none;
  background: #fff;
  border: 1.5px solid #8a8a8a;
}

.variant {
  position: relative;
  box-sizing: border-box;
  width: 102px;
  height: 279px;
  margin-left: 11px;
  margin-top: 16px;
  padding: 13px 0 0 5px;
  border: 1px solid #dcdcdc;
}
.variant-label {
  left: 11px;
  color: #222;
}
.variant-row {
  display: flex;
  gap: 3px;
  margin-bottom: 5px;
}
.var-s, .var-r {
  box-sizing: border-box;
  height: 28px;
  display: flex;
  align-items: center;
  justify-content: center;
  font-size: 16px;
}
.var-s {
  width: 41px;
  background: #e1e1e1;
  border: 2px solid #b0b0b0;
  color: #ff1a1a;
}
.var-r {
  width: 45px;
  background: #cccccc;
  color: #a0a0a0;
}
.var-r.current {
  background: #cce4f7;
  border: 2px solid #1567a8;
  color: #0000e6;
  font-weight: bold;
}

.right-pane {
  flex: 1;
  min-width: 0;
}
.top-bar {
  height: 48px;
  display: grid;
  grid-template-columns: 79px 65px 72px 27px 76px 65px 33px 45px 34px 47px 46px 187px 62px 21px 66px auto;
  align-items: center;
  justify-items: start;
  padding-left: 23px;
  padding-bottom: 2px;
  box-sizing: border-box;
}
.field {
  box-sizing: border-box;
  height: 30px;
  display: flex;
  align-items: center;
  justify-content: center;
  background: #fff;
  border: 1.5px solid #8c8c8c;
}
.field.w59 { width: 59px; }
.field.w58 { width: 58px; }
.field.w52 { width: 52px; }
.field.w177 {
  width: 177px;
  justify-content: flex-start;
  padding-left: 3px;
}
.field.off {
  background: #f0f0f0;
  border-color: #dadada;
  color: #8a8a8a;
}
.spin {
  box-sizing: border-box;
  width: 30px;
  height: 31px;
  background: #d6d6d6;
  border: 1px solid #b8b8b8;
}
.spin svg {
  display: block;
  width: 100%;
  height: 100%;
  fill: #444;
}
.round-btn {
  box-sizing: border-box;
  width: 39px;
  height: 33px;
  background: #e1e1e1;
  box-shadow: inset 0 0 0 2px #b4b4b4;
}
.round-btn svg {
  display: block;
  width: 100%;
  height: 100%;
}
.round-btn circle {
  fill: #2ba784;
}
.round-btn path {
  stroke: #fff;
  stroke-width: 4;
  fill: none;
}
.dots {
  color: #777;
}

.chart-grid {
  display: grid;
  grid-template-columns: 534px 535px;
  grid-auto-rows: 309px;
  column-gap: 9px;
  row-gap: 9px;
  margin-left: 17px;
}
.chart-panel {
  background: #fff;
  height: 309px;
  position: relative;
}
.chart-panel.raised {
  z-index: 2;
}
.chart {
  display: block;
  overflow: visible;
}
.chart text {
  font-size: 16px;
  fill: #222;
  dominant-baseline: central;
}
.chart text.end {
  text-anchor: end;
}
.chart text.mid {
  text-anchor: middle;
}
.grid-minor {
  fill: none;
  stroke: #e0e0e0;
  stroke-width: 1.4;
}
.grid-major {
  fill: none;
  stroke: #8a8a8a;
  stroke-width: 1.5;
}
.plot-frame {
  fill: none;
  stroke: #808080;
  stroke-width: 1.6;
}
.trace {
  fill: none;
  stroke-linejoin: round;
}
.chart text.note {
  font-family: "Open Sans", "Liberation Sans", sans-serif;
  font-weight: 700;
  font-size: 20px;
  dominant-baseline: auto;
}
.chart text.note-red {
  fill: #ed1c24;
}
.chart text.note-green {
  fill: #1eaf4c;
}
.note-arrow {
  fill: none;
  stroke: #ed1c24;
  stroke-width: 3.5;
  stroke-linejoin: miter;
}
</style>
